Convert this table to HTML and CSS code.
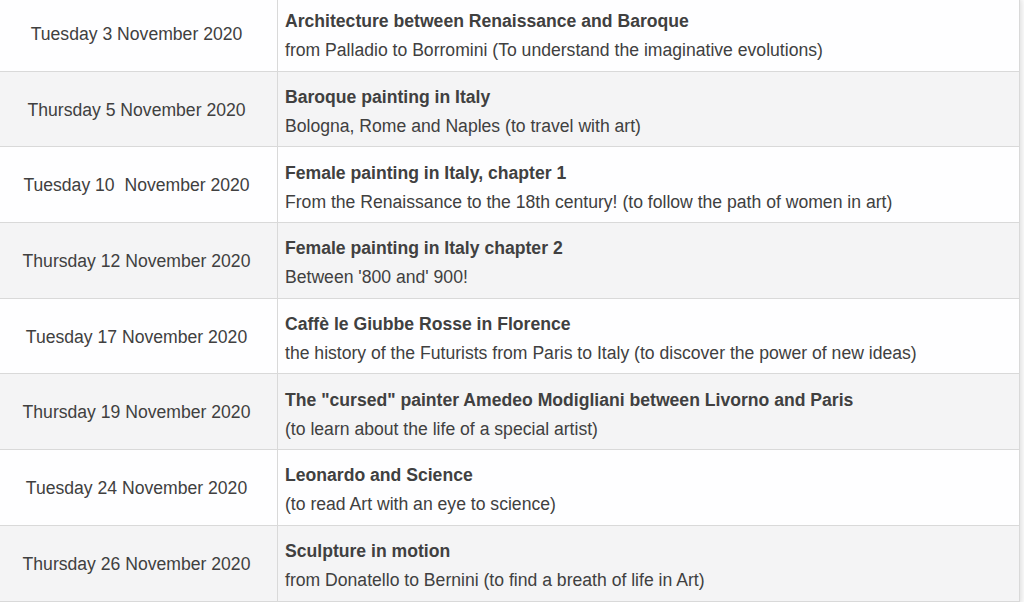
FILE: index.html
```html
<!DOCTYPE html>
<html lang="en">
<head>
<meta charset="utf-8">
<title>November 2020 program</title>
<link rel="stylesheet" href="styles.css">
</head>
<body>
<table class="program">
  <tbody>
    <tr>
      <td class="date">Tuesday 3 November 2020</td>
      <td class="topic"><div class="title">Architecture between Renaissance and Baroque</div><div class="sub">from Palladio to Borromini (To understand the imaginative evolutions)</div></td>
    </tr>
    <tr>
      <td class="date">Thursday 5 November 2020</td>
      <td class="topic"><div class="title">Baroque painting in Italy</div><div class="sub">Bologna, Rome and Naples (to travel with art)</div></td>
    </tr>
    <tr>
      <td class="date">Tuesday 10&nbsp; November 2020</td>
      <td class="topic"><div class="title">Female painting in Italy, chapter 1</div><div class="sub">From the Renaissance to the 18th century! (to follow the path of women in art)</div></td>
    </tr>
    <tr>
      <td class="date">Thursday 12 November 2020</td>
      <td class="topic"><div class="title">Female painting in Italy chapter 2</div><div class="sub">Between '800 and' 900!</div></td>
    </tr>
    <tr>
      <td class="date">Tuesday 17 November 2020</td>
      <td class="topic"><div class="title">Caffè le Giubbe Rosse in Florence</div><div class="sub">the history of the Futurists from Paris to Italy (to discover the power of new ideas)</div></td>
    </tr>
    <tr>
      <td class="date">Thursday 19 November 2020</td>
      <td class="topic"><div class="title">The "cursed" painter Amedeo Modigliani between Livorno and Paris</div><div class="sub">(to learn about the life of a special artist)</div></td>
    </tr>
    <tr>
      <td class="date">Tuesday 24 November 2020</td>
      <td class="topic"><div class="title">Leonardo and Science</div><div class="sub">(to read Art with an eye to science)</div></td>
    </tr>
    <tr>
      <td class="date">Thursday 26 November 2020</td>
      <td class="topic"><div class="title">Sculpture in motion</div><div class="sub">from Donatello to Bernini (to find a breath of life in Art)</div></td>
    </tr>
  </tbody>
</table>
</body>
</html>
```

FILE: styles.css
```css
html, body {
  margin: 0;
  padding: 0;
  background: #ffffff;
}

body {
  font-family: "Liberation Sans", Arial, Helvetica, sans-serif;
  font-size: 17.6px;
  color: #404040;
  overflow: hidden;
}

.program {
  border-collapse: separate;
  border-spacing: 0;
  table-layout: fixed;
  width: 1020px;
  margin-top: -5px;
  border-top: 1px solid #d9d9d9;
  box-shadow: 1px 3px 7px rgba(0, 0, 0, 0.16);
}

.program tr:nth-child(odd) td {
  background: #fefeff;
}

.program tr:nth-child(even) td {
  background: #f4f4f5;
}

.program td {
  box-sizing: border-box;
  height: 75.7px;
  border-bottom: 1px solid #d9d9d9;
  vertical-align: middle;
}

.date {
  width: 278px;
  border-right: 1px solid #d9d9d9;
  text-align: center;
  padding: 2px 4px 0 0;
  white-space: nowrap;
}

.topic {
  width: 742px;
  border-right: 1px solid #d9d9d9;
  padding: 6px 8px 0 7px;
  white-space: nowrap;
}

.title {
  font-weight: bold;
  line-height: 29px;
}

.sub {
  line-height: 29px;
}
```
